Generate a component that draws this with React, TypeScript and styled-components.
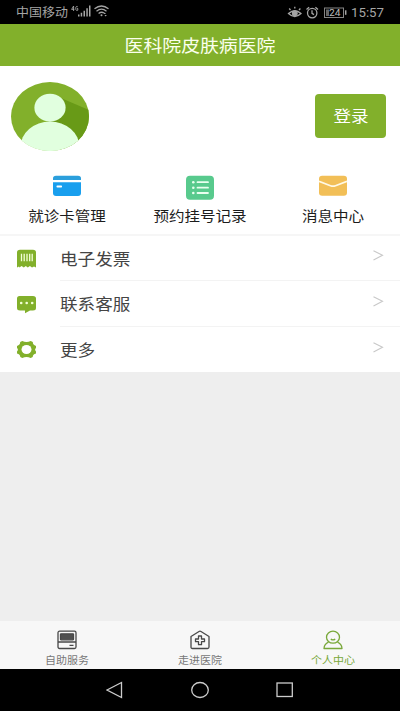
import React from "react";
import styled, { createGlobalStyle } from "styled-components";

const GREEN = "#82b02b";

const GlobalStyle = createGlobalStyle`
  * { box-sizing: border-box; }
  body { margin: 0; background: #eee; font-family: "Noto Sans CJK SC", sans-serif; }
  svg { display: block; flex: none; }
`;

const Screen = styled.div`
  width: 400px;
  height: 711px;
  display: flex;
  flex-direction: column;
  background: #eeeeee;
  overflow: hidden;
`;

const Label = styled.span<{ $size: number; $stretch?: number; $origin?: string }>`
  display: block;
  font-size: ${(p) => p.$size}px;
  line-height: 1.4;
  white-space: nowrap;
  transform: scaleX(${(p) => p.$stretch ?? 1.1});
  transform-origin: ${(p) => p.$origin ?? "center"};
`;

const StatusBar = styled.header`
  height: 24px;
  flex: none;
  display: flex;
  align-items: center;
  justify-content: space-between;
  padding: 1px 16px 0 16px;
  background: #000;
  color: #a5a5a5;
`;

const StatusGroup = styled.div`
  display: flex;
  align-items: center;
`;

const Carrier = styled.div`
  width: 54px;
`;

const Clock = styled.div`
  width: 33px;
  margin-left: 4px;
  font: 12.5px/23px Roboto, sans-serif;
  transform: scaleX(1.06);
  transform-origin: left;
`;

const TitleBar = styled.div`
  height: 42px;
  flex: none;
  display: flex;
  align-items: center;
  justify-content: center;
  background: ${GREEN};
  color: #fbffed;
`;

const Profile = styled.section`
  height: 101px;
  flex: none;
  display: flex;
  align-items: flex-start;
  justify-content: space-between;
  padding: 16px 14px 0 11px;
  background: #fff;
`;

const LoginButton = styled.button`
  width: 71px;
  height: 44px;
  margin-top: 12px;
  padding: 0 0 1px 1px;
  display: flex;
  align-items: center;
  justify-content: center;
  border: 0;
  border-radius: 4px;
  background: ${GREEN};
  color: #fff;
  font-family: inherit;
`;

const Shortcuts = styled.nav`
  height: 69px;
  flex: none;
  display: grid;
  grid-template-columns: repeat(3, 1fr);
  padding-top: 8px;
  background: #fff;
  border-bottom: 2px solid #f6f6f6;
`;

const Shortcut = styled.div`
  display: flex;
  flex-direction: column;
  align-items: center;
  color: #1c1c1c;
`;

const ShortcutIcon = styled.div`
  height: 31px;
`;

const Menu = styled.section`
  height: 136px;
  flex: none;
  display: grid;
  grid-template-rows: 45px 46px 45px;
  background: #fff;
`;

const MenuRow = styled.div`
  display: flex;
  padding-left: 16px;
`;

const MenuIcon = styled.div`
  width: 44px;
  display: flex;
  align-items: center;
`;

const MenuBody = styled.div<{ $last?: boolean }>`
  flex: 1;
  display: flex;
  align-items: center;
  justify-content: space-between;
  padding: 0 16px 0 0;
  border-bottom: ${(p) => (p.$last ? "0" : "1px solid #f3f3f3")};
  color: #444;
`;

const ArrowBox = styled.div`
  padding-bottom: 5px;
`;

const Filler = styled.main`
  flex: 1;
`;

const TabBar = styled.nav`
  height: 48px;
  flex: none;
  display: grid;
  grid-template-columns: repeat(3, 1fr);
  background: #f7f7f7;
`;

const Tab = styled.div<{ $active?: boolean }>`
  display: flex;
  flex-direction: column;
  align-items: center;
  padding-top: 9px;
  gap: 3px;
  color: ${(p) => (p.$active ? "#79a83a" : "#777")};
`;

const SystemNav = styled.footer`
  height: 42px;
  flex: none;
  display: flex;
  align-items: center;
  justify-content: center;
  gap: 67px;
  background: #000;
`;

const Signal = () => (
  <svg width="39" height="16" viewBox="70 4.5 39 16" fill="#a5a5a5">
    <path d="M73.600 6.500l-2 3.400h2.700M73.600 6.500v5M77.800 7.400c-.8-1.100-2.100-.5-2.100 1.500s1.200 2.500 2.100 1.800V9h-1" fill="none" stroke="#a5a5a5" strokeWidth=".9" />
    <path d="M78 15h1.500v2H78zM80.700 13.300h1.500V17h-1.500zM83.500 11.200H85V17h-1.500zM86.300 8.700h1.500V17h-1.500zM89 6h1.500v11H89z" />
    <g fill="none" stroke="#a5a5a5" strokeWidth="1.300">
      <path d="M94.500 9.300q7-5.600 14 0M96.500 11.700q5-4 10 0M98.600 14q2.900-2.300 5.300-.5" />
    </g>
    <circle cx="101.500" cy="15.800" r="1" />
    <path d="M103.500 14.500l1.200-1.700 1.200 1.700zM104.500 15.500h2.300l-1.150 1.500z" />
  </svg>
);

const StatusIcons = () => (
  <svg width="60" height="16" viewBox="288 4.500 60 16" fill="none" stroke="#a5a5a5" strokeWidth="1.300">
    <path d="M289.500 13q6.300-5.500 12.500 0-6.200 6-12.500 0zM291.500 9.500l-1.300-1.500M295.800 8V6.200M300 9.500l1.400-1.500" />
    <circle cx="295.800" cy="12.800" r="2.300" fill="#a5a5a5" />
    <circle cx="313.200" cy="12.600" r="4.700" />
    <path d="M313 9.700v3.100l2 1.300M307.500 9l2.600-2.300M316.400 6.700l2.600 2.300" />
    <rect x="325.500" y="7.500" width="19" height="9.500" stroke="#858585" strokeWidth="1" />
    <path d="M346.700 9.800v4.500" strokeWidth="1.500" />
    <path d="M327 9h3v6.500h-3z" fill="#666" stroke="none" />
    <text x="330" y="15.600" fontSize="9" fontFamily="Roboto, sans-serif" fill="#bbb" stroke="none" textLength="11.500" lengthAdjust="spacingAndGlyphs">24</text>
  </svg>
);

const Avatar = () => (
  <svg width="78" height="70" viewBox="0 0 78 70">
    <defs>
      <clipPath id="disc"><ellipse cx="39" cy="34.500" rx="39" ry="34.500" /></clipPath>
    </defs>
    <g clipPath="url(#disc)">
      <path d="M0 0h78v70H0z" fill={GREEN} />
      <path d="M51 16.500L78 28v42H50L36 40z" fill="#689a17" />
      <ellipse cx="39" cy="65" rx="29.500" ry="25.500" fill="#e1ffdf" />
      <path d="M6 58h66v12H6z" fill="#e1ffdf" />
      <ellipse cx="39" cy="25.700" rx="15.600" ry="14" fill="#e1ffdf" />
    </g>
  </svg>
);

const CardIcon = () => (
  <svg width="28" height="21" viewBox="0 0 28 21">
    <path d="M0 5V3.500Q0 .7 3 .7h22q3 0 3 2.800V5z" fill="#2b9fdc" />
    <path d="M0 7.300h28V18q0 3-3 3H3q-3 0-3-3z" fill="#199fee" />
    <rect x="3.500" y="10.500" width="5.500" height="2" rx=".7" fill="#fff" />
  </svg>
);

const ListIcon = () => (
  <svg width="28" height="25" viewBox="0 0 28 25">
    <rect y=".7" width="28" height="24" rx="4" fill="#58ca8d" />
    <path d="M11.500 7.200h10.500M11.500 12.700h10.500M11.500 18h10.500" stroke="#e9ffef" strokeWidth="1.800" strokeLinecap="round" />
    <g fill="#e9ffef"><circle cx="7.300" cy="7.200" r="1.300" /><circle cx="7.300" cy="12.700" r="1.300" /><circle cx="7.300" cy="18" r="1.300" /></g>
  </svg>
);

const MailIcon = () => (
  <svg width="28" height="21" viewBox="0 0 28 21">
    <rect y=".7" width="28" height="20" rx="3.200" fill="#f2bf57" />
    <path d="M0 6.300l11.500 4.400q2.500 1 5 0L28 6.300" fill="none" stroke="#fff9e5" strokeWidth="1.700" />
  </svg>
);

const InvoiceIcon = () => (
  <svg width="20" height="19" viewBox="0 0 20 19">
    <path d="M1 3.500Q1 .7 4 .7h13q3 0 3 2.800V18.500l-2-1-2 1-2.100-1.500-2.100 1.500-2-1.500-2 1.500-2.200-1.500-2.200 1.500L3 17.500l-2 1z" fill={GREEN} />
    <path d="M5.500 4.800v7.400M8.200 4.800v7.400M11 4.800v7.400M13.700 4.800v7.400M16.200 4.800v7.400" stroke="#f3ffd7" strokeWidth="1.300" />
  </svg>
);

const ChatIcon = () => (
  <svg width="20" height="19" viewBox="0 0 20 19">
    <path d="M3.500 1H17q3 0 3 2.500V13q0 2.500-3 2.500h-3L9 18.200V15.500H4q-3 0-3-2.500V3.500Q1 1 3.500 1z" fill={GREEN} />
    <g fill="#f3ffd7"><circle cx="5.200" cy="8" r="1.300" /><circle cx="10.700" cy="8" r="1.300" /><circle cx="16.200" cy="8" r="1.300" /></g>
  </svg>
);

const GearIcon = () => (
  <svg width="20" height="19" viewBox="0 0 20 19">
    <path d="M6.300 1q4.200 2 8.400 0l2.100 1.100Q16.800 5.200 20 6v2q-1.800 1.500 0 3.600v1.800q-3.200.5-3.300 3.500l-2 1.100q-4.200-2-8.400 0l-2-1.100Q4.200 13.900 1 13.400v-1.800q1.800-2.100 0-3.600V6q3.200-.8 3.200-3.900z" fill={GREEN} />
    <ellipse cx="10.500" cy="9.500" rx="5" ry="4.500" fill="#fff" />
  </svg>
);

const Arrow = () => (
  <svg width="11" height="11" viewBox="0 0 11 11" fill="none" stroke="#c8c8c8" strokeWidth="1.100">
    <path d="M.5.800L9.500 5.300.5 9.900" />
  </svg>
);

const KioskIcon = () => (
  <svg width="20" height="20" viewBox="0 0 20 20" fill="none" stroke="#484848" strokeWidth="1.300">
    <rect x="1" y="1.200" width="18" height="17.300" rx="1.500" />
    <rect x="3.500" y="3.800" width="13" height="6" rx=".5" fill="#505050" />
    <path d="M1 12h18M12.500 15.400h4" />
  </svg>
);

const HospitalIcon = () => (
  <svg width="20" height="20" viewBox="0 0 20 20" fill="none" stroke="#484848" strokeWidth="1.300" strokeLinejoin="round">
    <path d="M1 6.500l8-5q1-.6 2 0l8 5v10.500q0 1.500-1.500 1.500h-15Q1 18.500 1 17z" />
    <path d="M8.500 6h3v3h3v2.700h-3v3h-3v-3h-3V9h3z" />
  </svg>
);

const PersonIcon = () => (
  <svg width="20" height="20" viewBox="0 0 20 20" fill="none" stroke="#79a83a" strokeWidth="1.300" strokeLinejoin="round">
    <ellipse cx="10" cy="7.200" rx="6.500" ry="6" />
    <path d="M7.800 8.900q2.200 2 4.400 0M5.500 12.200Q1.300 14 1 18.500h18q-.3-4.500-4.500-6.300" />
  </svg>
);

const shortcuts = [
  { label: "就诊卡管理", icon: <CardIcon /> },
  { label: "预约挂号记录", icon: <ListIcon /> },
  { label: "消息中心", icon: <MailIcon /> },
];

const menu = [
  { label: "电子发票", icon: <InvoiceIcon /> },
  { label: "联系客服", icon: <ChatIcon /> },
  { label: "更多", icon: <GearIcon /> },
];

const tabs = [
  { label: "自助服务", icon: <KioskIcon /> },
  { label: "走进医院", icon: <HospitalIcon /> },
  { label: "个人中心", icon: <PersonIcon />, active: true },
];

export default function App() {
  return (
    <Screen>
      <GlobalStyle />
      <StatusBar>
        <StatusGroup>
          <Carrier><Label $size={12} $stretch={1.08} $origin="left">中国移动</Label></Carrier>
          <Signal />
        </StatusGroup>
        <StatusGroup>
          <StatusIcons />
          <Clock>15:57</Clock>
        </StatusGroup>
      </StatusBar>
      <TitleBar><Label $size={17} $stretch={1.11}>医科院皮肤病医院</Label></TitleBar>
      <Profile>
        <Avatar />
        <LoginButton><Label $size={16}>登录</Label></LoginButton>
      </Profile>
      <Shortcuts>
        {shortcuts.map((s) => (
          <Shortcut key={s.label}>
            <ShortcutIcon>{s.icon}</ShortcutIcon>
            <Label $size={14} $stretch={1.11}>{s.label}</Label>
          </Shortcut>
        ))}
      </Shortcuts>
      <Menu>
        {menu.map((m, i) => (
          <MenuRow key={m.label}>
            <MenuIcon>{m.icon}</MenuIcon>
            <MenuBody $last={i === menu.length - 1}>
              <Label $size={16} $origin="left">{m.label}</Label>
              <ArrowBox><Arrow /></ArrowBox>
            </MenuBody>
          </MenuRow>
        ))}
      </Menu>
      <Filler />
      <TabBar>
        {tabs.map((t) => (
          <Tab key={t.label} $active={t.active}>
            {t.icon}
            <Label $size={10}>{t.label}</Label>
          </Tab>
        ))}
      </TabBar>
      <SystemNav>
        <svg width="18" height="18" viewBox="0 0 18 18" fill="none" stroke="#ccc" strokeWidth="1.300"><path d="M1 9L15.500 1.500v15z" /></svg>
        <svg width="18" height="18" viewBox="0 0 18 18" fill="none" stroke="#ccc" strokeWidth="1.300"><ellipse cx="9" cy="9" rx="8.300" ry="7.500" /></svg>
        <svg width="18" height="18" viewBox="0 0 18 18" fill="none" stroke="#ccc" strokeWidth="1.300"><rect x="1" y="2" width="15.300" height="13.500" /></svg>
      </SystemNav>
    </Screen>
  );
}
